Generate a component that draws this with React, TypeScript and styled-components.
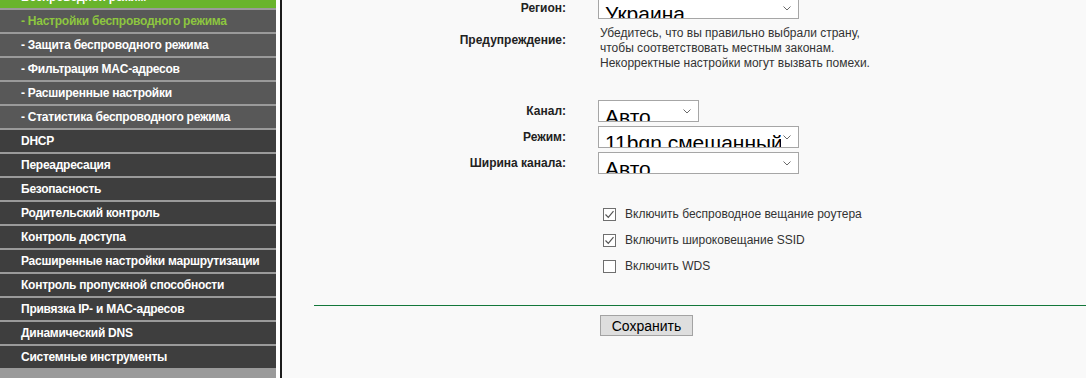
import React from 'react';
import styled, {createGlobalStyle} from 'styled-components';

type MenuVariant = 'section' | 'sub' | 'main';

type MenuEntry = {
    title: string;
    variant: MenuVariant;
    active?: boolean;
}

const MENU: MenuEntry[] = [
    {title: 'Беспроводной режим', variant: 'section'},
    {title: '- Настройки беспроводного режима', variant: 'sub', active: true},
    {title: '- Защита беспроводного режима', variant: 'sub'},
    {title: '- Фильтрация MAC-адресов', variant: 'sub'},
    {title: '- Расширенные настройки', variant: 'sub'},
    {title: '- Статистика беспроводного режима', variant: 'sub'},
    {title: 'DHCP', variant: 'main'},
    {title: 'Переадресация', variant: 'main'},
    {title: 'Безопасность', variant: 'main'},
    {title: 'Родительский контроль', variant: 'main'},
    {title: 'Контроль доступа', variant: 'main'},
    {title: 'Расширенные настройки маршрутизации', variant: 'main'},
    {title: 'Контроль пропускной способности', variant: 'main'},
    {title: 'Привязка IP- и MAC-адресов', variant: 'main'},
    {title: 'Динамический DNS', variant: 'main'},
    {title: 'Системные инструменты', variant: 'main'},
];

const CHECKS = [
    {label: 'Включить беспроводное вещание роутера', checked: true},
    {label: 'Включить широковещание SSID', checked: true},
    {label: 'Включить WDS', checked: false},
];

const Chevron = () => (
    <svg width="8" height="5" viewBox="0 0 8 5">
        <path d="M0.5 0.5 L4 4 L7.5 0.5" fill="none" stroke="#6a6a6a" strokeWidth="1"/>
    </svg>
);

const Tick = () => (
    <svg width="11" height="11" viewBox="0 0 11 11">
        <path d="M1.5 5.5 L4.3 8.3 L9.5 2.2" fill="none" stroke="#555" strokeWidth="1.2"/>
    </svg>
);

type SelectProps = {
    value: string;
    width: number;
}

const Select = ({value, width}: SelectProps) => (
    <SelectBox $width={width}>
        <SelectValue>{value}</SelectValue>
        <Chevron/>
    </SelectBox>
);

const App = () => {
    return (
        <>
            <GlobalStyle/>
            <Page>
                <Sidebar>
                    {MENU.map(item => (
                        <MenuItem key={item.title} $variant={item.variant} $active={item.active}>
                            {item.title}
                        </MenuItem>
                    ))}
                </Sidebar>

                <Content>
                    <FormRow $top={0}>
                        <Label>Регион:</Label>
                        <Select value="Украина" width={201}/>
                    </FormRow>

                    <FormRow $top={7} $align="start">
                        <Label $offset={7}>Предупреждение:</Label>
                        <Warning>
                            Убедитесь, что вы правильно выбрали страну,<br/>
                            чтобы соответствовать местным законам.<br/>
                            Некорректные настройки могут вызвать помехи.
                        </Warning>
                    </FormRow>

                    <FormRow $top={29}>
                        <Label>Канал:</Label>
                        <Select value="Авто" width={101}/>
                    </FormRow>
                    <FormRow $top={4}>
                        <Label>Режим:</Label>
                        <Select value="11bgn смешанный" width={201}/>
                    </FormRow>
                    <FormRow $top={4}>
                        <Label>Ширина канала:</Label>
                        <Select value="Авто" width={201}/>
                    </FormRow>

                    {CHECKS.map((c, i) => (
                        <FormRow key={c.label} $top={i === 0 ? 30 : 6}>
                            <span/>
                            <CheckLine>
                                <CheckBox>{c.checked && <Tick/>}</CheckBox>
                                {c.label}
                            </CheckLine>
                        </FormRow>
                    ))}

                    <Divider/>
                    <SaveButton>Сохранить</SaveButton>
                </Content>
            </Page>
        </>
    );
};

export default App;

const GlobalStyle = createGlobalStyle`
  html, body {
    margin: 0;
    padding: 0;
    overflow: hidden;
    background: #f9f9f9;
  }
  body {
    font-family: "Liberation Sans", Arial, sans-serif;
  }
`;

const Page = styled.div`
  display: flex;
  margin-top: -14px;
  min-height: 392px;
`;

const Sidebar = styled.nav`
  width: 276px;
  flex-shrink: 0;
  display: flex;
  flex-direction: column;
  gap: 2px;
  background: #9a9a9a;
  border-right: 4px solid #ffffff;
`;

const MENU_BG: Record<MenuVariant, string> = {
    section: '#69b42c',
    sub: '#585858',
    main: '#3e3e3e',
};

type MenuItemProps = {
    $variant: MenuVariant;
    $active?: boolean;
}

const MenuItem = styled.div<MenuItemProps>`
  height: 22px;
  line-height: 22px;
  padding-left: 21px;
  font-size: 12px;
  font-weight: bold;
  letter-spacing: -0.25px;
  white-space: nowrap;
  overflow: hidden;
  color: ${props => props.$active ? '#8dc63f' : '#ffffff'};
  background: ${props => MENU_BG[props.$variant]};
`;

const Content = styled.main`
  flex: 1;
  border-left: 2px solid #1c1c1c;
  padding-top: 11px;
  background: #f9f9f9;
`;

type FormRowProps = {
    $top: number;
    $align?: 'center' | 'start';
}

const FormRow = styled.div<FormRowProps>`
  display: grid;
  grid-template-columns: 284px 1fr;
  column-gap: 32px;
  align-items: ${props => props.$align || 'center'};
  margin-top: ${props => props.$top}px;
`;

const Label = styled.div<{ $offset?: number }>`
  text-align: right;
  font-size: 12px;
  font-weight: bold;
  color: #222;
  padding-top: ${props => props.$offset || 0}px;
`;

const SelectBox = styled.div<{ $width: number }>`
  width: ${props => props.$width}px;
  height: 22px;
  box-sizing: border-box;
  display: flex;
  align-items: center;
  gap: 2px;
  padding: 0 7px 0 6px;
  border: 1px solid #a6a6a6;
  background: #ffffff;
  overflow: hidden;
`;

const SelectValue = styled.span`
  flex: 1;
  min-width: 0;
  align-self: flex-start;
  padding-top: 4px;
  font-size: 21px;
  line-height: 24px;
  color: #000;
  white-space: nowrap;
  overflow: hidden;
`;

const Warning = styled.div`
  font-size: 12px;
  line-height: 15px;
  color: #333;
  padding-left: 2px;
`;

const CheckLine = styled.label`
  height: 20px;
  display: flex;
  align-items: center;
  gap: 9px;
  padding-left: 5px;
  font-size: 12px;
  color: #333;
`;

const CheckBox = styled.span`
  width: 13px;
  height: 13px;
  box-sizing: border-box;
  display: flex;
  align-items: center;
  justify-content: center;
  border: 1px solid #6f6f6f;
  background: #ffffff;
`;

const Divider = styled.div`
  margin: 29px 0 0 32px;
  height: 1px;
  background: #13783a;
`;

const SaveButton = styled.button`
  display: block;
  margin: 9px 0 0 318px;
  width: 93px;
  height: 21px;
  padding: 0;
  border: 1px solid #a3a3a3;
  background: #dedede;
  font-family: "Liberation Sans", Arial, sans-serif;
  font-size: 14px;
  color: #000;
`;
